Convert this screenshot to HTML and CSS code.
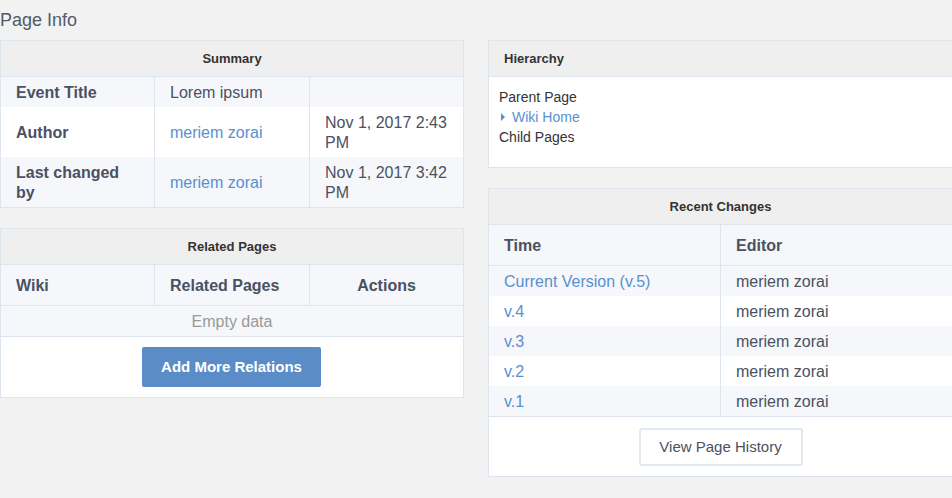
FILE: index.html
```html
<!DOCTYPE html>
<html>
<head>
<meta charset="utf-8">
<title>Page Info</title>
<link rel="stylesheet" href="styles.css">
</head>
<body>
<h1 class="page-title">Page Info</h1>
<div class="layout">
  <div class="column">
    <section class="panel">
      <div class="panel-head center">Summary</div>
      <div class="grid3">
        <div class="cell label">Event Title</div>
        <div class="cell">Lorem ipsum</div>
        <div class="cell last"></div>
        <div class="cell label white tallrow">Author</div>
        <div class="cell white tallrow"><a class="link">meriem zorai</a></div>
        <div class="cell last white">Nov 1, 2017 2:43 PM</div>
        <div class="cell label">Last changed by</div>
        <div class="cell tallrow"><a class="link">meriem zorai</a></div>
        <div class="cell last">Nov 1, 2017 3:42 PM</div>
      </div>
    </section>
    <section class="panel">
      <div class="panel-head center">Related Pages</div>
      <div class="grid3 thead">
        <div class="hcell">Wiki</div>
        <div class="hcell">Related Pages</div>
        <div class="hcell center">Actions</div>
      </div>
      <div class="empty">Empty data</div>
      <div class="btn-row">
        <button class="btn-primary">Add More Relations</button>
      </div>
    </section>
  </div>
  <div class="column">
    <section class="panel wide">
      <div class="panel-head left">Hierarchy</div>
      <div class="hier">
        <div>Parent Page</div>
        <div class="hier-link"><span class="caret"></span><a class="link">Wiki Home</a></div>
        <div>Child Pages</div>
      </div>
    </section>
    <section class="panel wide">
      <div class="panel-head center">Recent Changes</div>
      <div class="grid2 thead">
        <div class="hcell">Time</div>
        <div class="hcell last">Editor</div>
      </div>
      <div class="grid2 tbody">
        <div class="rcell"><a class="link">Current Version (v.5)</a></div>
        <div class="rcell last">meriem zorai</div>
        <div class="rcell white"><a class="link">v.4</a></div>
        <div class="rcell last white">meriem zorai</div>
        <div class="rcell"><a class="link">v.3</a></div>
        <div class="rcell last">meriem zorai</div>
        <div class="rcell white"><a class="link">v.2</a></div>
        <div class="rcell last white">meriem zorai</div>
        <div class="rcell"><a class="link">v.1</a></div>
        <div class="rcell last">meriem zorai</div>
      </div>
      <div class="btn-row tall">
        <button class="btn-default">View Page History</button>
      </div>
    </section>
  </div>
</div>
</body>
</html>
```
FILE: styles.css
```css
html, body {
  margin: 0;
  padding: 0;
  overflow: hidden;
}
body {
  background: #f2f2f2;
  font-family: "Liberation Sans", Arial, sans-serif;
  color: #4a5163;
  width: 952px;
  height: 498px;
}
.page-title {
  margin: 0;
  font-size: 18px;
  font-weight: normal;
  line-height: 40px;
  height: 40px;
  color: #535a68;
}
.layout {
  display: grid;
  grid-template-columns: 464px 465px;
  column-gap: 24px;
  align-items: start;
}
.column {
  display: flex;
  flex-direction: column;
  gap: 20px;
}
.panel {
  border: 1px solid #dde5ee;
  background: #fff;
  box-sizing: border-box;
  width: 464px;
}
.panel.wide {
  width: 465px;
}
.panel-head {
  height: 35px;
  line-height: 36px;
  background: #efefef;
  border-bottom: 1px solid #dde5ee;
  font-size: 13px;
  font-weight: bold;
  color: #333;
}
.panel-head.center { text-align: center; }
.panel-head.left { padding-left: 15px; }
.center { text-align: center; }

.grid3 {
  display: grid;
  grid-template-columns: 154px 155px 1fr;
}
.grid2 {
  display: grid;
  grid-template-columns: 232px 1fr;
}
.cell {
  background: #f5f7fa;
  padding: 6px 15px 4px;
  font-size: 16px;
  line-height: 20px;
  border-right: 1px solid #dde5ee;
  color: #4a5163;
}
.cell.last { border-right: none; }
.cell.white { background: #fff; }
.cell.label { font-weight: bold; }
.cell.tallrow { padding-top: 16px; padding-bottom: 14px; }

.link {
  color: #5a8fd0;
  text-decoration: none;
  cursor: pointer;
}
.thead {
  border-bottom: 1px solid #dde5ee;
}
.hcell {
  background: #f5f7fa;
  padding: 11px 15px 9px;
  font-size: 16px;
  line-height: 20px;
  font-weight: bold;
  color: #4a5163;
  border-right: 1px solid #dde5ee;
}
.grid3 .hcell:last-child { border-right: none; }
.hcell.last { border-right: none; }
.empty {
  background: #f5f7fa;
  height: 30px;
  line-height: 31px;
  text-align: center;
  color: #999;
  font-size: 16px;
  border-bottom: 1px solid #dde5ee;
}
.btn-row {
  padding: 10px 0;
  display: flex;
  justify-content: center;
}
.btn-row.tall {
  padding: 11px 0 10px;
}
.btn-primary {
  height: 40px;
  width: 179px;
  padding: 0;
  margin-left: -1px;
  background: #5a8dc8;
  color: #fff;
  border: none;
  border-radius: 2px;
  font-family: "Liberation Sans", Arial, sans-serif;
  font-size: 15px;
  font-weight: bold;
  line-height: 38px;
}
.btn-default {
  height: 38px;
  width: 164px;
  padding: 0 0 2px;
  background: #fff;
  color: #4a5163;
  border: 2px solid #e3e8ee;
  border-radius: 3px;
  font-family: "Liberation Sans", Arial, sans-serif;
  font-size: 15px;
}
.hier {
  padding: 10px 10px 20px;
  font-size: 14px;
  line-height: 20px;
  color: #333;
}
.hier-link {
  display: flex;
  align-items: center;
}
.caret {
  width: 0;
  height: 0;
  border-top: 4px solid transparent;
  border-bottom: 4px solid transparent;
  border-left: 4px solid #5a8fd0;
  margin: 0 7px 0 2px;
}
.rcell {
  background: #f5f7fa;
  padding: 6px 15px 4px;
  font-size: 16px;
  line-height: 20px;
  border-right: 1px solid #dde5ee;
  color: #4a5163;
}
.rcell.white { background: #fff; }
.rcell.last { border-right: none; }
.tbody {
  border-bottom: 1px solid #dde5ee;
}
```
